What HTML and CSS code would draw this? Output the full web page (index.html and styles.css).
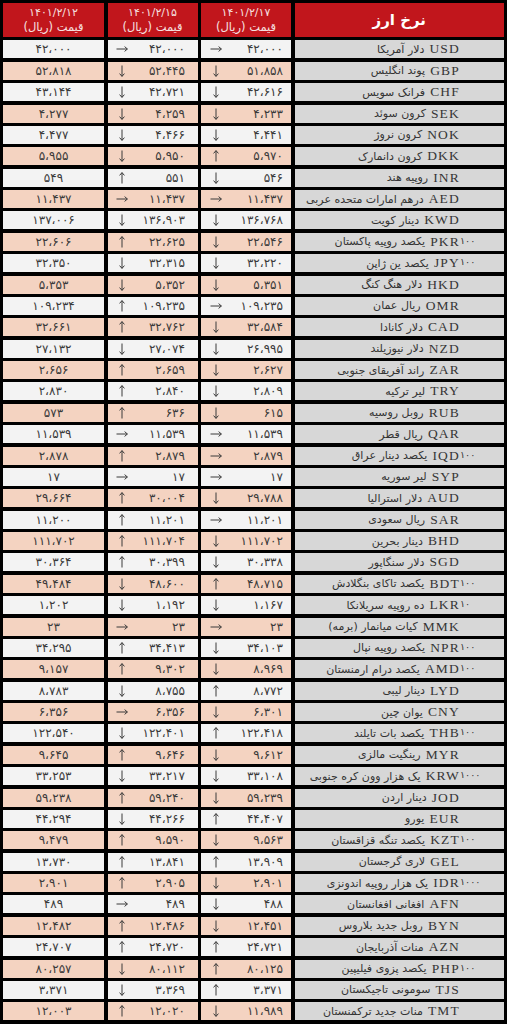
FILE: index.html
```html
<!DOCTYPE html>
<html lang="fa">
<head>
<meta charset="utf-8">
<title>نرخ ارز</title>
<link rel="stylesheet" href="styles.css">
</head>
<body>
<svg class="defs" width="0" height="0" aria-hidden="true">
  <symbol id="d" viewBox="0 0 12 12"><path d="M6 0.5V11.3M3.6 8.6L6 11.4L8.4 8.6" fill="none" stroke="#3a3a3a" stroke-width="1"/></symbol>
  <symbol id="u" viewBox="0 0 12 12"><path d="M6 11.5V0.7M3.6 3.4L6 0.6L8.4 3.4" fill="none" stroke="#3a3a3a" stroke-width="1"/></symbol>
  <symbol id="e" viewBox="0 0 12 12"><path d="M0.5 6H11.3M8.6 3.6L11.4 6L8.6 8.4" fill="none" stroke="#3a3a3a" stroke-width="1"/></symbol>
</svg>
<div class="tbl" dir="rtl">
<div class="row hd"><div class="c h hn">نرخ ارز</div><div class="c h"><span class="dt">۱۴۰۱/۲/۱۷</span><span>قیمت (ریال)</span></div><div class="c h"><span class="dt">۱۴۰۱/۲/۱۵</span><span>قیمت (ریال)</span></div><div class="c h"><span class="dt">۱۴۰۱/۲/۱۲</span><span>قیمت (ریال)</span></div></div>

<div class="row"><div class="c n"><span class="cd">USD</span><span class="fa">دلار آمریکا</span></div><div class="c p s3"><span class="num">۴۲،۰۰۰</span><svg class="a"><use href="#e"/></svg></div><div class="c p s2"><span class="num">۴۲،۰۰۰</span><svg class="a"><use href="#e"/></svg></div><div class="c v"><span class="num">۴۲،۰۰۰</span></div></div>
<div class="row"><div class="c n"><span class="cd">GBP</span><span class="fa">پوند انگلیس</span></div><div class="c p s3"><span class="num">۵۱،۸۵۸</span><svg class="a"><use href="#d"/></svg></div><div class="c p s2"><span class="num">۵۲،۴۴۵</span><svg class="a"><use href="#d"/></svg></div><div class="c v"><span class="num">۵۲،۸۱۸</span></div></div>
<div class="row"><div class="c n"><span class="cd">CHF</span><span class="fa">فرانک سویس</span></div><div class="c p s3"><span class="num">۴۲،۶۱۶</span><svg class="a"><use href="#d"/></svg></div><div class="c p s2"><span class="num">۴۲،۷۲۱</span><svg class="a"><use href="#d"/></svg></div><div class="c v"><span class="num">۴۳،۱۴۴</span></div></div>
<div class="row"><div class="c n"><span class="cd">SEK</span><span class="fa">کرون سوئد</span></div><div class="c p s3"><span class="num">۴،۲۳۳</span><svg class="a"><use href="#d"/></svg></div><div class="c p s2"><span class="num">۴،۲۵۹</span><svg class="a"><use href="#d"/></svg></div><div class="c v"><span class="num">۴،۲۷۷</span></div></div>
<div class="row"><div class="c n"><span class="cd">NOK</span><span class="fa">کرون نروژ</span></div><div class="c p s3"><span class="num">۴،۴۴۱</span><svg class="a"><use href="#d"/></svg></div><div class="c p s2"><span class="num">۴،۴۶۶</span><svg class="a"><use href="#d"/></svg></div><div class="c v"><span class="num">۴،۴۷۷</span></div></div>
<div class="row"><div class="c n"><span class="cd">DKK</span><span class="fa">کرون دانمارک</span></div><div class="c p s3"><span class="num">۵،۹۷۰</span><svg class="a"><use href="#u"/></svg></div><div class="c p s2"><span class="num">۵،۹۵۰</span><svg class="a"><use href="#d"/></svg></div><div class="c v"><span class="num">۵،۹۵۵</span></div></div>
<div class="row"><div class="c n"><span class="cd">INR</span><span class="fa">روپیه هند</span></div><div class="c p s3"><span class="num">۵۴۶</span><svg class="a"><use href="#d"/></svg></div><div class="c p s2"><span class="num">۵۵۱</span><svg class="a"><use href="#u"/></svg></div><div class="c v"><span class="num">۵۴۹</span></div></div>
<div class="row"><div class="c n"><span class="cd">AED</span><span class="fa">درهم امارات متحده عربی</span></div><div class="c p s3"><span class="num">۱۱،۴۳۷</span><svg class="a"><use href="#e"/></svg></div><div class="c p s2"><span class="num">۱۱،۴۳۷</span><svg class="a"><use href="#e"/></svg></div><div class="c v"><span class="num">۱۱،۴۳۷</span></div></div>
<div class="row"><div class="c n"><span class="cd">KWD</span><span class="fa">دینار کویت</span></div><div class="c p s3"><span class="num">۱۳۶،۷۶۸</span><svg class="a"><use href="#d"/></svg></div><div class="c p s2"><span class="num">۱۳۶،۹۰۳</span><svg class="a"><use href="#d"/></svg></div><div class="c v"><span class="num">۱۳۷،۰۰۶</span></div></div>
<div class="row"><div class="c n"><span class="cd">PKR<span class="m">۱۰۰</span></span><span class="fa">یکصد روپیه پاکستان</span></div><div class="c p s3"><span class="num">۲۲،۵۴۶</span><svg class="a"><use href="#d"/></svg></div><div class="c p s2"><span class="num">۲۲،۶۲۵</span><svg class="a"><use href="#u"/></svg></div><div class="c v"><span class="num">۲۲،۶۰۶</span></div></div>
<div class="row"><div class="c n"><span class="cd">JPY<span class="m">۱۰۰</span></span><span class="fa">یکصد ین ژاپن</span></div><div class="c p s3"><span class="num">۳۲،۲۲۰</span><svg class="a"><use href="#d"/></svg></div><div class="c p s2"><span class="num">۳۲،۳۱۵</span><svg class="a"><use href="#d"/></svg></div><div class="c v"><span class="num">۳۲،۳۵۰</span></div></div>
<div class="row"><div class="c n"><span class="cd">HKD</span><span class="fa">دلار هنگ کنگ</span></div><div class="c p s3"><span class="num">۵،۳۵۱</span><svg class="a"><use href="#d"/></svg></div><div class="c p s2"><span class="num">۵،۳۵۲</span><svg class="a"><use href="#d"/></svg></div><div class="c v"><span class="num">۵،۳۵۳</span></div></div>
<div class="row"><div class="c n"><span class="cd">OMR</span><span class="fa">ریال عمان</span></div><div class="c p s3"><span class="num">۱۰۹،۲۳۵</span><svg class="a"><use href="#e"/></svg></div><div class="c p s2"><span class="num">۱۰۹،۲۳۵</span><svg class="a"><use href="#u"/></svg></div><div class="c v"><span class="num">۱۰۹،۲۳۴</span></div></div>
<div class="row"><div class="c n"><span class="cd">CAD</span><span class="fa">دلار کانادا</span></div><div class="c p s3"><span class="num">۳۲،۵۸۴</span><svg class="a"><use href="#d"/></svg></div><div class="c p s2"><span class="num">۳۲،۷۶۲</span><svg class="a"><use href="#u"/></svg></div><div class="c v"><span class="num">۳۲،۶۶۱</span></div></div>
<div class="row"><div class="c n"><span class="cd">NZD</span><span class="fa">دلار نیوزیلند</span></div><div class="c p s3"><span class="num">۲۶،۹۹۵</span><svg class="a"><use href="#d"/></svg></div><div class="c p s2"><span class="num">۲۷،۰۷۴</span><svg class="a"><use href="#d"/></svg></div><div class="c v"><span class="num">۲۷،۱۳۲</span></div></div>
<div class="row"><div class="c n"><span class="cd">ZAR</span><span class="fa">راند آفریقای جنوبی</span></div><div class="c p s3"><span class="num">۲،۶۲۷</span><svg class="a"><use href="#d"/></svg></div><div class="c p s2"><span class="num">۲،۶۵۹</span><svg class="a"><use href="#u"/></svg></div><div class="c v"><span class="num">۲،۶۵۶</span></div></div>
<div class="row"><div class="c n"><span class="cd">TRY</span><span class="fa">لیر ترکیه</span></div><div class="c p s3"><span class="num">۲،۸۰۹</span><svg class="a"><use href="#d"/></svg></div><div class="c p s2"><span class="num">۲،۸۴۰</span><svg class="a"><use href="#u"/></svg></div><div class="c v"><span class="num">۲،۸۳۰</span></div></div>
<div class="row"><div class="c n"><span class="cd">RUB</span><span class="fa">روبل روسیه</span></div><div class="c p s3"><span class="num">۶۱۵</span><svg class="a"><use href="#d"/></svg></div><div class="c p s2"><span class="num">۶۳۶</span><svg class="a"><use href="#u"/></svg></div><div class="c v"><span class="num">۵۷۳</span></div></div>
<div class="row"><div class="c n"><span class="cd">QAR</span><span class="fa">ریال قطر</span></div><div class="c p s3"><span class="num">۱۱،۵۳۹</span><svg class="a"><use href="#e"/></svg></div><div class="c p s2"><span class="num">۱۱،۵۳۹</span><svg class="a"><use href="#e"/></svg></div><div class="c v"><span class="num">۱۱،۵۳۹</span></div></div>
<div class="row"><div class="c n"><span class="cd">IQD<span class="m">۱۰۰</span></span><span class="fa">یکصد دینار عراق</span></div><div class="c p s3"><span class="num">۲،۸۷۹</span><svg class="a"><use href="#e"/></svg></div><div class="c p s2"><span class="num">۲،۸۷۹</span><svg class="a"><use href="#u"/></svg></div><div class="c v"><span class="num">۲،۸۷۸</span></div></div>
<div class="row"><div class="c n"><span class="cd">SYP</span><span class="fa">لیر سوریه</span></div><div class="c p s3"><span class="num">۱۷</span><svg class="a"><use href="#e"/></svg></div><div class="c p s2"><span class="num">۱۷</span><svg class="a"><use href="#e"/></svg></div><div class="c v"><span class="num">۱۷</span></div></div>
<div class="row"><div class="c n"><span class="cd">AUD</span><span class="fa">دلار استرالیا</span></div><div class="c p s3"><span class="num">۲۹،۷۸۸</span><svg class="a"><use href="#d"/></svg></div><div class="c p s2"><span class="num">۳۰،۰۰۴</span><svg class="a"><use href="#u"/></svg></div><div class="c v"><span class="num">۲۹،۶۶۴</span></div></div>
<div class="row"><div class="c n"><span class="cd">SAR</span><span class="fa">ریال سعودی</span></div><div class="c p s3"><span class="num">۱۱،۲۰۱</span><svg class="a"><use href="#e"/></svg></div><div class="c p s2"><span class="num">۱۱،۲۰۱</span><svg class="a"><use href="#u"/></svg></div><div class="c v"><span class="num">۱۱،۲۰۰</span></div></div>
<div class="row"><div class="c n"><span class="cd">BHD</span><span class="fa">دینار بحرین</span></div><div class="c p s3"><span class="num">۱۱۱،۷۰۲</span><svg class="a"><use href="#d"/></svg></div><div class="c p s2"><span class="num">۱۱۱،۷۰۴</span><svg class="a"><use href="#u"/></svg></div><div class="c v"><span class="num">۱۱۱،۷۰۲</span></div></div>
<div class="row"><div class="c n"><span class="cd">SGD</span><span class="fa">دلار سنگاپور</span></div><div class="c p s3"><span class="num">۳۰،۳۳۸</span><svg class="a"><use href="#d"/></svg></div><div class="c p s2"><span class="num">۳۰،۳۹۹</span><svg class="a"><use href="#u"/></svg></div><div class="c v"><span class="num">۳۰،۳۶۴</span></div></div>
<div class="row"><div class="c n"><span class="cd">BDT<span class="m">۱۰۰</span></span><span class="fa">یکصد تاکای بنگلادش</span></div><div class="c p s3"><span class="num">۴۸،۷۱۵</span><svg class="a"><use href="#u"/></svg></div><div class="c p s2"><span class="num">۴۸،۶۰۰</span><svg class="a"><use href="#d"/></svg></div><div class="c v"><span class="num">۴۹،۴۸۴</span></div></div>
<div class="row"><div class="c n"><span class="cd">LKR<span class="m">۱۰</span></span><span class="fa">ده روپیه سریلانکا</span></div><div class="c p s3"><span class="num">۱،۱۶۷</span><svg class="a"><use href="#d"/></svg></div><div class="c p s2"><span class="num">۱،۱۹۲</span><svg class="a"><use href="#d"/></svg></div><div class="c v"><span class="num">۱،۲۰۲</span></div></div>
<div class="row"><div class="c n"><span class="cd">MMK</span><span class="fa">کیات میانمار (برمه)</span></div><div class="c p s3"><span class="num">۲۳</span><svg class="a"><use href="#e"/></svg></div><div class="c p s2"><span class="num">۲۳</span><svg class="a"><use href="#e"/></svg></div><div class="c v"><span class="num">۲۳</span></div></div>
<div class="row"><div class="c n"><span class="cd">NPR<span class="m">۱۰۰</span></span><span class="fa">یکصد روپیه نپال</span></div><div class="c p s3"><span class="num">۳۴،۱۰۳</span><svg class="a"><use href="#d"/></svg></div><div class="c p s2"><span class="num">۳۴،۴۱۳</span><svg class="a"><use href="#u"/></svg></div><div class="c v"><span class="num">۳۴،۲۹۵</span></div></div>
<div class="row"><div class="c n"><span class="cd">AMD<span class="m">۱۰۰</span></span><span class="fa">یکصد درام ارمنستان</span></div><div class="c p s3"><span class="num">۸،۹۶۹</span><svg class="a"><use href="#d"/></svg></div><div class="c p s2"><span class="num">۹،۳۰۲</span><svg class="a"><use href="#u"/></svg></div><div class="c v"><span class="num">۹،۱۵۷</span></div></div>
<div class="row"><div class="c n"><span class="cd">LYD</span><span class="fa">دینار لیبی</span></div><div class="c p s3"><span class="num">۸،۷۷۲</span><svg class="a"><use href="#u"/></svg></div><div class="c p s2"><span class="num">۸،۷۵۵</span><svg class="a"><use href="#d"/></svg></div><div class="c v"><span class="num">۸،۷۸۳</span></div></div>
<div class="row"><div class="c n"><span class="cd">CNY</span><span class="fa">یوان چین</span></div><div class="c p s3"><span class="num">۶،۳۰۱</span><svg class="a"><use href="#d"/></svg></div><div class="c p s2"><span class="num">۶،۳۵۶</span><svg class="a"><use href="#e"/></svg></div><div class="c v"><span class="num">۶،۳۵۶</span></div></div>
<div class="row"><div class="c n"><span class="cd">THB<span class="m">۱۰۰</span></span><span class="fa">یکصد بات تایلند</span></div><div class="c p s3"><span class="num">۱۲۲،۴۱۸</span><svg class="a"><use href="#u"/></svg></div><div class="c p s2"><span class="num">۱۲۲،۴۰۱</span><svg class="a"><use href="#d"/></svg></div><div class="c v"><span class="num">۱۲۲،۵۴۰</span></div></div>
<div class="row"><div class="c n"><span class="cd">MYR</span><span class="fa">رینگیت مالزی</span></div><div class="c p s3"><span class="num">۹،۶۱۲</span><svg class="a"><use href="#d"/></svg></div><div class="c p s2"><span class="num">۹،۶۴۶</span><svg class="a"><use href="#u"/></svg></div><div class="c v"><span class="num">۹،۶۴۵</span></div></div>
<div class="row"><div class="c n"><span class="cd">KRW<span class="m">۱۰۰۰</span></span><span class="fa">یک هزار وون کره جنوبی</span></div><div class="c p s3"><span class="num">۳۳،۱۰۸</span><svg class="a"><use href="#d"/></svg></div><div class="c p s2"><span class="num">۳۳،۲۱۷</span><svg class="a"><use href="#d"/></svg></div><div class="c v"><span class="num">۳۳،۲۵۳</span></div></div>
<div class="row"><div class="c n"><span class="cd">JOD</span><span class="fa">دینار اردن</span></div><div class="c p s3"><span class="num">۵۹،۲۳۹</span><svg class="a"><use href="#d"/></svg></div><div class="c p s2"><span class="num">۵۹،۲۴۰</span><svg class="a"><use href="#u"/></svg></div><div class="c v"><span class="num">۵۹،۲۳۸</span></div></div>
<div class="row"><div class="c n"><span class="cd">EUR</span><span class="fa">یورو</span></div><div class="c p s3"><span class="num">۴۴،۴۰۷</span><svg class="a"><use href="#u"/></svg></div><div class="c p s2"><span class="num">۴۴،۲۶۶</span><svg class="a"><use href="#d"/></svg></div><div class="c v"><span class="num">۴۴،۲۹۴</span></div></div>
<div class="row"><div class="c n"><span class="cd">KZT<span class="m">۱۰۰</span></span><span class="fa">یکصد تنگه قزاقستان</span></div><div class="c p s3"><span class="num">۹،۵۶۳</span><svg class="a"><use href="#d"/></svg></div><div class="c p s2"><span class="num">۹،۵۹۰</span><svg class="a"><use href="#u"/></svg></div><div class="c v"><span class="num">۹،۴۷۹</span></div></div>
<div class="row"><div class="c n"><span class="cd">GEL</span><span class="fa">لاری گرجستان</span></div><div class="c p s3"><span class="num">۱۳،۹۰۹</span><svg class="a"><use href="#u"/></svg></div><div class="c p s2"><span class="num">۱۳،۸۴۱</span><svg class="a"><use href="#u"/></svg></div><div class="c v"><span class="num">۱۳،۷۳۰</span></div></div>
<div class="row"><div class="c n"><span class="cd">IDR<span class="m">۱۰۰۰</span></span><span class="fa">یک هزار روپیه اندونزی</span></div><div class="c p s3"><span class="num">۲،۹۰۱</span><svg class="a"><use href="#d"/></svg></div><div class="c p s2"><span class="num">۲،۹۰۵</span><svg class="a"><use href="#u"/></svg></div><div class="c v"><span class="num">۲،۹۰۱</span></div></div>
<div class="row"><div class="c n"><span class="cd">AFN</span><span class="fa">افغانی افغانستان</span></div><div class="c p s3"><span class="num">۴۸۸</span><svg class="a"><use href="#d"/></svg></div><div class="c p s2"><span class="num">۴۸۹</span><svg class="a"><use href="#e"/></svg></div><div class="c v"><span class="num">۴۸۹</span></div></div>
<div class="row"><div class="c n"><span class="cd">BYN</span><span class="fa">روبل جدید بلاروس</span></div><div class="c p s3"><span class="num">۱۲،۴۵۱</span><svg class="a"><use href="#d"/></svg></div><div class="c p s2"><span class="num">۱۲،۴۸۶</span><svg class="a"><use href="#u"/></svg></div><div class="c v"><span class="num">۱۲،۴۸۲</span></div></div>
<div class="row"><div class="c n"><span class="cd">AZN</span><span class="fa">منات آذربایجان</span></div><div class="c p s3"><span class="num">۲۴،۷۲۱</span><svg class="a"><use href="#u"/></svg></div><div class="c p s2"><span class="num">۲۴،۷۲۰</span><svg class="a"><use href="#u"/></svg></div><div class="c v"><span class="num">۲۴،۷۰۷</span></div></div>
<div class="row"><div class="c n"><span class="cd">PHP<span class="m">۱۰۰</span></span><span class="fa">یکصد پزوی فیلیپین</span></div><div class="c p s3"><span class="num">۸۰،۱۲۵</span><svg class="a"><use href="#u"/></svg></div><div class="c p s2"><span class="num">۸۰،۱۱۲</span><svg class="a"><use href="#d"/></svg></div><div class="c v"><span class="num">۸۰،۲۵۷</span></div></div>
<div class="row"><div class="c n"><span class="cd">TJS</span><span class="fa">سومونی تاجیکستان</span></div><div class="c p s3"><span class="num">۳،۳۷۱</span><svg class="a"><use href="#u"/></svg></div><div class="c p s2"><span class="num">۳،۳۶۹</span><svg class="a"><use href="#d"/></svg></div><div class="c v"><span class="num">۳،۳۷۱</span></div></div>
<div class="row"><div class="c n"><span class="cd">TMT</span><span class="fa">منات جدید ترکمنستان</span></div><div class="c p s3"><span class="num">۱۱،۹۸۹</span><svg class="a"><use href="#d"/></svg></div><div class="c p s2"><span class="num">۱۲،۰۲۰</span><svg class="a"><use href="#u"/></svg></div><div class="c v"><span class="num">۱۲،۰۰۳</span></div></div>
</div>
</body>
</html>
```

FILE: styles.css
```css
* { box-sizing: border-box; margin: 0; padding: 0; }
html, body { background: #000; }
body { width: 507px; font-family: "DejaVu Sans", sans-serif; color: #3a3a3a; }
.defs { display: block; width: 0; height: 0; overflow: hidden; }

.tbl {
  direction: rtl;
  display: flex;
  flex-direction: column;
  gap: 3.38px;
  padding: 3px 3px 0 3px;
}
.row {
  display: grid;
  grid-template-columns: 1fr 90px 90px 101px;
  column-gap: 3.5px;
  height: 18px;
}
.row.hd { height: 34px; }

.c { display: flex; align-items: center; min-width: 0; }

.h {
  background: #c1161c;
  color: #f6e0e0;
  flex-direction: column;
  justify-content: center;
  font-size: 11.5px;
  line-height: 14px;
}
.h .dt { direction: ltr; unicode-bidi: isolate; font-size: 11px; }
.hn { font-size: 15px; font-weight: bold; color: #fff; }

.n {
  background: #d7d7d7;
  justify-content: flex-start;
  padding-right: 44px;
  white-space: nowrap;
}
.cd {
  position: relative;
  font-family: "Liberation Serif", serif;
  font-size: 13.5px;
  letter-spacing: 1.2px;
  color: #353535;
  direction: ltr;
  unicode-bidi: isolate;
}
.m {
  position: absolute;
  left: 100%;
  top: 1px;
  font-family: "DejaVu Sans", sans-serif;
  font-size: 9.5px;
  letter-spacing: -0.6px;
}
.fa { font-size: 11px; margin-right: 5px; color: #333; }

.p, .v { background: #f3f3f3; }
.row:nth-child(2n+3) .p, .row:nth-child(2n+3) .v { background: #f4d3c1; }

.p { justify-content: space-between; padding-left: 8.5px; }
.s3 { padding-right: 8px; }
.s2 { padding-right: 12.5px; }
.v { justify-content: center; }

.num { direction: ltr; unicode-bidi: isolate; font-size: 12px; color: #3a3a3a; }
.a { width: 12px; height: 12px; flex: none; }
```
